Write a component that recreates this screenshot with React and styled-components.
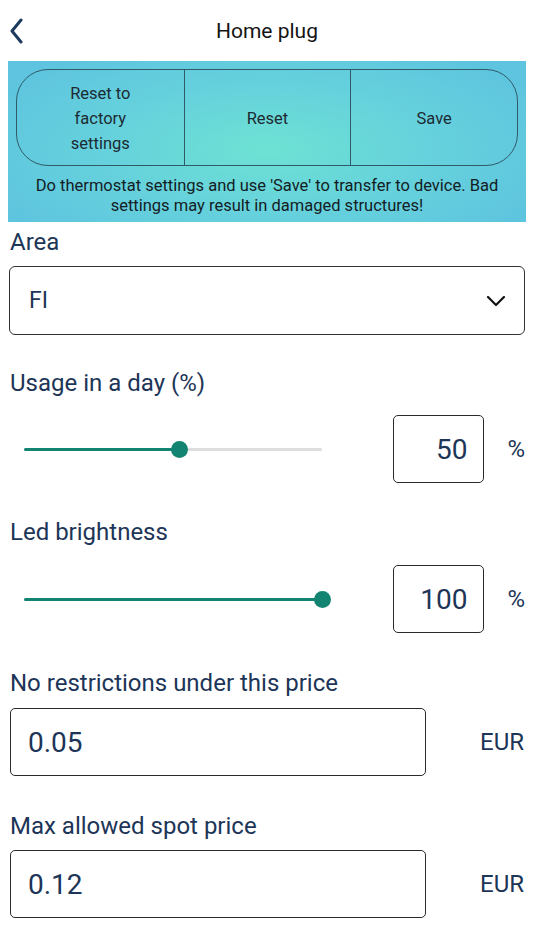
import React from "react";
import styled, { createGlobalStyle } from "styled-components";

const Global = createGlobalStyle`
  html, body { margin: 0; padding: 0; background: #ffffff; }
  body { font-family: Roboto, "Noto Sans", "Liberation Sans", sans-serif; }
  * { box-sizing: border-box; }
`;

const Page = styled.div`
  width: 534px;
  min-height: 950px;
  background: #fff;
`;

const Header = styled.header`
  height: 61px;
  display: grid;
  grid-template-columns: 48px 1fr 48px;
  align-items: center;
`;

const BackButton = styled.button`
  border: none;
  background: none;
  padding: 0 0 0 8px;
  height: 40px;
  display: flex;
  align-items: center;
  cursor: pointer;
`;

const Title = styled.h1`
  margin: 0;
  text-align: center;
  font-size: 21px;
  font-weight: 400;
  color: #141414;
`;

const Banner = styled.section`
  margin: 0 8px;
  padding: 8px 8px 6px;
  background: radial-gradient(ellipse 60% 75% at 50% 55%, #6ee2d3 0%, #66d2dc 50%, #5ec4df 100%);
`;

const ButtonGroup = styled.div`
  height: 97px;
  display: grid;
  grid-template-columns: 1fr 1fr 1fr;
  border: 1.5px solid #2f5b69;
  border-radius: 32px;
  overflow: hidden;
`;

const GroupButton = styled.button`
  border: none;
  border-left: ${(p) => (p.$first ? "none" : "1.5px solid #2f5b69")};
  background: transparent;
  font-family: inherit;
  font-size: 16.5px;
  line-height: 25px;
  color: #1c2a33;
  padding: 2px 34px 0;
  cursor: pointer;
`;

const Notice = styled.p`
  margin: 10px 0 0;
  text-align: center;
  font-size: 16.5px;
  line-height: 20px;
  color: #141c24;
`;

const Content = styled.main`
  padding: 6px 9px 0 9px;
  display: flex;
  flex-direction: column;
`;

const Label = styled.div`
  font-size: 24px;
  line-height: 28px;
  color: #1d3557;
  margin-top: ${(p) => p.$mt || 0}px;
  margin-bottom: ${(p) => p.$mb || 0}px;
  padding-left: 1px;
`;

const Select = styled.div`
  height: 69px;
  border: 1.5px solid #333;
  border-radius: 6px;
  display: flex;
  align-items: center;
  justify-content: space-between;
  padding: 0 18px 0 19px;
  font-size: 23px;
  color: #1d3557;
`;

const SliderRow = styled.div`
  display: flex;
  align-items: center;
  height: 68px;
  padding: 0 0 0 15px;
`;

const SliderTrack = styled.div`
  position: relative;
  width: 298px;
  height: 3px;
  background: #dddddd;
  border-radius: 2px;
`;

const SliderFill = styled.div`
  position: absolute;
  left: 0;
  top: 0;
  height: 3px;
  background: #138471;
  border-radius: 2px;
`;

const SliderThumb = styled.div`
  position: absolute;
  top: 50%;
  width: 17px;
  height: 17px;
  margin-left: -8.5px;
  margin-top: -8.5px;
  border-radius: 50%;
  background: #138471;
`;

const Spacer = styled.div`
  flex: 1;
`;

const ValueBox = styled.div`
  width: 91px;
  height: 68px;
  border: 1.5px solid #2a2a2a;
  border-radius: 5px;
  display: flex;
  align-items: center;
  justify-content: flex-end;
  padding-right: 16px;
  font-size: 28px;
  color: #1d3557;
`;

const Unit = styled.span`
  font-size: 24px;
  color: #1d3557;
  margin-left: ${(p) => p.$ml}px;
`;

const InputRow = styled.div`
  display: flex;
  align-items: center;
  justify-content: space-between;
  padding-right: 1px;
`;

const PriceInput = styled.div`
  width: 416px;
  height: 68px;
  margin-left: 1px;
  border: 1.5px solid #2a2a2a;
  border-radius: 5px;
  display: flex;
  align-items: center;
  padding-left: 17px;
  font-size: 28px;
  color: #1d3557;
`;

const Chevron = ({ d, color, w, h, sw }) => (
  <svg width={w} height={h} viewBox={`0 0 ${w} ${h}`} fill="none">
    <path d={d} stroke={color} strokeWidth={sw} strokeLinecap="round" strokeLinejoin="round" />
  </svg>
);

const Slider = ({ value }) => {
  const pos = 12 + (value / 100) * (298 - 12);
  return (
    <SliderTrack>
      <SliderFill style={{ width: pos }} />
      <SliderThumb style={{ left: pos }} />
    </SliderTrack>
  );
};

export default function App() {
  return (
    <Page>
      <Global />
      <Header>
        <BackButton aria-label="Back">
          <Chevron w={18} h={26} sw={3} color="#1d3a5f" d="M13 2 L4 13 L13 24" />
        </BackButton>
        <Title>Home plug</Title>
        <div />
      </Header>
      <Banner>
        <ButtonGroup>
          <GroupButton $first>Reset to factory settings</GroupButton>
          <GroupButton>Reset</GroupButton>
          <GroupButton>Save</GroupButton>
        </ButtonGroup>
        <Notice>
          Do thermostat settings and use 'Save' to transfer to device. Bad settings may result in damaged structures!
        </Notice>
      </Banner>
      <Content>
        <Label $mb={10}>Area</Label>
        <Select>
          <span>FI</span>
          <Chevron w={20} h={12} sw={2.2} color="#111" d="M2 2 L10 10 L18 2" />
        </Select>

        <Label $mt={34} $mb={18}>Usage in a day (%)</Label>
        <SliderRow>
          <Slider value={50} />
          <Spacer />
          <ValueBox>50</ValueBox>
          <Unit $ml={23}>%</Unit>
        </SliderRow>

        <Label $mt={35} $mb={19}>Led brightness</Label>
        <SliderRow>
          <Slider value={100} />
          <Spacer />
          <ValueBox>100</ValueBox>
          <Unit $ml={23}>%</Unit>
        </SliderRow>

        <Label $mt={36} $mb={11}>No restrictions under this price</Label>
        <InputRow>
          <PriceInput>0.05</PriceInput>
          <Unit $ml={0}>EUR</Unit>
        </InputRow>

        <Label $mt={36} $mb={10}>Max allowed spot price</Label>
        <InputRow>
          <PriceInput>0.12</PriceInput>
          <Unit $ml={0}>EUR</Unit>
        </InputRow>
      </Content>
    </Page>
  );
}
